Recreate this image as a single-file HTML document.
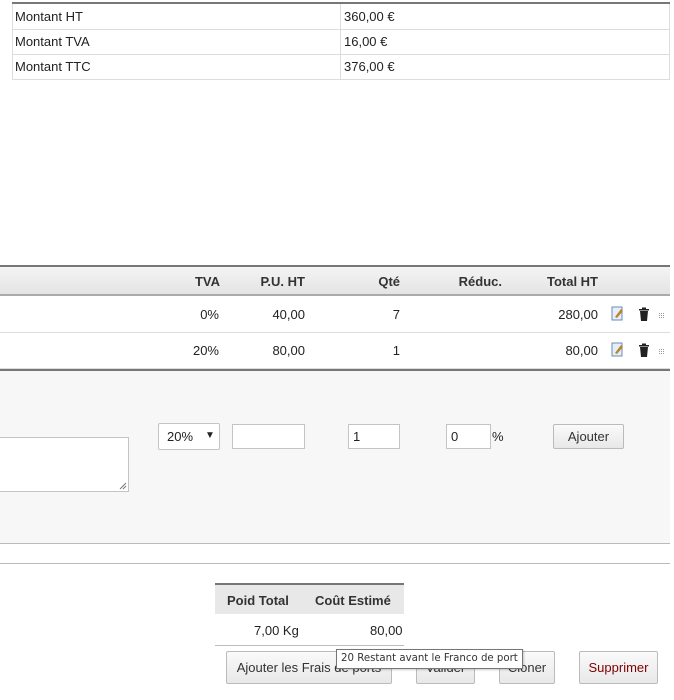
<!DOCTYPE html>
<html><head><meta charset="utf-8"><style>
*{margin:0;padding:0;box-sizing:border-box}
body{width:674px;height:700px;background:#fff;position:relative;overflow:hidden;font-family:"Liberation Sans",Arial,sans-serif;font-size:13px;color:#222}
.a{position:absolute}
.t{white-space:nowrap}
.r{position:absolute;white-space:nowrap;text-align:right;width:100px}
.hd{font-weight:bold;color:#333}
.btn{position:absolute;border:1px solid #bbb;border-radius:2px;background:linear-gradient(#fafafa,#e8e8e8);font-size:13px;color:#333;text-align:center;white-space:nowrap}
.inp{position:absolute;background:#fff;border:1px solid #c4c4c4}
</style></head><body>
<div class="a" style="left:12px;top:2px;width:658px;height:2px;background:#777"></div>
<div class="a" style="left:12px;top:4px;width:658px;height:76px;border:1px solid #ddd;border-top:none"></div>
<div class="a" style="left:12px;top:29px;width:658px;height:1px;background:#ddd"></div>
<div class="a" style="left:12px;top:54px;width:658px;height:1px;background:#ddd"></div>
<div class="a" style="left:340px;top:4px;width:1px;height:76px;background:#ddd"></div>
<div class="a t" style="left:15px;top:9px">Montant HT</div>
<div class="a t" style="left:344px;top:9px">360,00 €</div>
<div class="a t" style="left:15px;top:34px">Montant TVA</div>
<div class="a t" style="left:344px;top:34px">16,00 €</div>
<div class="a t" style="left:15px;top:59px">Montant TTC</div>
<div class="a t" style="left:344px;top:59px">376,00 €</div>

<div class="a" style="left:0;top:265px;width:670px;height:2px;background:#777"></div>
<div class="a" style="left:0;top:267px;width:670px;height:29px;background:linear-gradient(#f4f4f4,#e4e4e4);border-bottom:2px solid #aaa"></div>
<div class="r hd" style="left:120px;top:274px">TVA</div>
<div class="r hd" style="left:205px;top:274px">P.U. HT</div>
<div class="r hd" style="left:300px;top:274px">Qté</div>
<div class="r hd" style="left:402px;top:274px">Réduc.</div>
<div class="r hd" style="left:498px;top:274px">Total HT</div>

<div class="a" style="left:0;top:332px;width:670px;height:1px;background:#ddd"></div>
<div class="r" style="left:119px;top:307px">0%</div>
<div class="r" style="left:205px;top:307px">40,00</div>
<div class="r" style="left:300px;top:307px">7</div>
<div class="r" style="left:498px;top:307px">280,00</div>
<div class="r" style="left:119px;top:343px">20%</div>
<div class="r" style="left:205px;top:343px">80,00</div>
<div class="r" style="left:300px;top:343px">1</div>
<div class="r" style="left:498px;top:343px">80,00</div>

<svg class="a" style="left:611px;top:306px" width="60" height="16">
<rect x="1" y="1" width="10" height="13" fill="#e6eef8" stroke="#6a8cb8"/><path d="M4 11 L10 3 L12 5 L6 12 Z" fill="#b8862c"/>
<path d="M28 3h10v1.5h-10zM31 1.5h4v1.5h-4zM29 5h8l-1 10h-6z" fill="#222"/>
<g fill="#999"><rect x="48" y="7" width="1" height="1"/><rect x="50" y="7" width="1" height="1"/><rect x="52" y="7" width="1" height="1"/><rect x="48" y="9" width="1" height="1"/><rect x="50" y="9" width="1" height="1"/><rect x="52" y="9" width="1" height="1"/><rect x="48" y="11" width="1" height="1"/><rect x="50" y="11" width="1" height="1"/><rect x="52" y="11" width="1" height="1"/></g>
</svg>
<svg class="a" style="left:611px;top:342px" width="60" height="16">
<rect x="1" y="1" width="10" height="13" fill="#e6eef8" stroke="#6a8cb8"/><path d="M4 11 L10 3 L12 5 L6 12 Z" fill="#b8862c"/>
<path d="M28 3h10v1.5h-10zM31 1.5h4v1.5h-4zM29 5h8l-1 10h-6z" fill="#222"/>
<g fill="#999"><rect x="48" y="7" width="1" height="1"/><rect x="50" y="7" width="1" height="1"/><rect x="52" y="7" width="1" height="1"/><rect x="48" y="9" width="1" height="1"/><rect x="50" y="9" width="1" height="1"/><rect x="52" y="9" width="1" height="1"/><rect x="48" y="11" width="1" height="1"/><rect x="50" y="11" width="1" height="1"/><rect x="52" y="11" width="1" height="1"/></g>
</svg>

<div class="a" style="left:0;top:368px;width:670px;height:1px;background:#ddd"></div>
<div class="a" style="left:0;top:369px;width:670px;height:2px;background:#777"></div>

<div class="a" style="left:0;top:371px;width:670px;height:172px;background:#f7f7f7"></div>
<div class="inp" style="left:-2px;top:437px;width:131px;height:55px"></div>
<svg class="a" style="left:119px;top:482px" width="8" height="8"><path d="M1 7L7 1M4 7L7 4" stroke="#777"/></svg>
<div class="inp" style="left:158px;top:423px;width:62px;height:27px;border-radius:2px"></div>
<div class="a t" style="left:167px;top:429px">20%</div>
<div class="a t" style="left:205px;top:430px;font-size:10px">▼</div>
<div class="inp" style="left:232px;top:424px;width:73px;height:25px"></div>
<div class="inp" style="left:348px;top:424px;width:52px;height:25px"></div>
<div class="a t" style="left:353px;top:429px">1</div>
<div class="inp" style="left:446px;top:424px;width:45px;height:25px"></div>
<div class="a t" style="left:451px;top:429px">0</div>
<div class="a t" style="left:492px;top:429px">%</div>
<div class="btn" style="left:553px;top:424px;width:71px;height:25px;line-height:23px">Ajouter</div>

<div class="a" style="left:0;top:543px;width:670px;height:1px;background:#bbb"></div>
<div class="a" style="left:0;top:563px;width:670px;height:1px;background:#bbb"></div>

<div class="a" style="left:215px;top:583px;width:189px;height:2px;background:#777"></div>
<div class="a" style="left:215px;top:585px;width:189px;height:29px;background:#e8e8e8"></div>
<div class="a t" style="left:227px;top:593px;font-weight:bold;font-size:13px;color:#333">Poid Total</div>
<div class="a t" style="left:315px;top:593px;font-weight:bold;font-size:13px;color:#333">Coût Estimé</div>
<div class="a t" style="left:254px;top:623px;font-size:13px">7,00 Kg</div>
<div class="a t" style="left:370px;top:623px;font-size:13px">80,00</div>
<div class="a" style="left:215px;top:645px;width:189px;height:1px;background:#bbb"></div>

<div class="btn" style="left:226px;top:651px;width:166px;height:33px;line-height:31px">Ajouter les Frais de ports</div>
<div class="btn" style="left:416px;top:651px;width:59px;height:33px;line-height:31px">Valider</div>
<div class="btn" style="left:499px;top:651px;width:56px;height:33px;line-height:31px">Cloner</div>
<div class="btn" style="left:579px;top:651px;width:79px;height:33px;line-height:31px;color:#800000">Supprimer</div>

<div class="a t" style="left:336px;top:649px;height:20px;padding:0 4px;background:#fff;border:1px solid #767676;font-family:'DejaVu Sans',sans-serif;font-size:10.2px;line-height:18px;color:#333;box-shadow:1px 1px 2px rgba(0,0,0,.2)">20 Restant avant le Franco de port</div>
</body></html>
